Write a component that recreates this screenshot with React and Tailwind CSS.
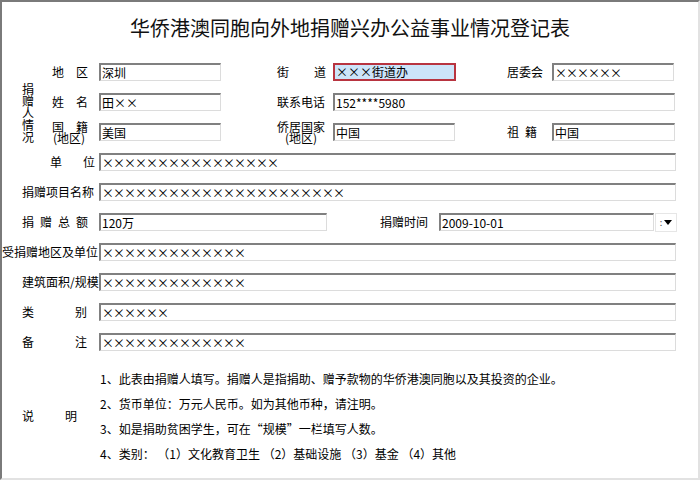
const inputCls =
  'h-[18px] shrink-0 bg-white border-t-2 border-l-2 border-r border-b border-t-[#808080] border-l-[#808080] border-r-[#dcdcdc] border-b-[#dcdcdc] pl-[1px] text-[12px] leading-[15px] whitespace-nowrap overflow-hidden';

const Field = ({ className = '', children }) => (
  <div className={`${inputCls} ${className}`}>{children}</div>
);

const Spread = ({ className = '', chars }) => (
  <div className={`flex justify-between ${className}`}>
    {chars.map((c) => (
      <span key={c}>{c}</span>
    ))}
  </div>
);

const notes = [
  '1、此表由捐赠人填写。捐赠人是指捐助、赠予款物的华侨港澳同胞以及其投资的企业。',
  '2、货币单位：万元人民币。如为其他币种，请注明。',
  '3、如是捐助贫困学生，可在“规模”一栏填写人数。',
  '4、类别： （1）文化教育卫生 （2）基础设施 （3）基金 （4）其他',
];

const App = () => {
  return (
    <div className="w-[700px] h-[480px] bg-white text-black text-[12px] leading-[18px] font-['Noto_Sans_CJK_SC','Liberation_Sans',sans-serif] border-t-2 border-l-2 border-r-2 border-b-2 border-t-[#7a7a7a] border-l-[#7a7a7a] border-r-[#e2e2e2] border-b-[#e2e2e2] overflow-hidden">
      <div className="pt-[12px] text-center text-[20px] leading-[28px] text-[#111]">
        华侨港澳同胞向外地捐赠兴办公益事业情况登记表
      </div>

      <div className="mt-[21px] flex flex-col gap-[12px]">
        {/* 捐赠人情况 */}
        <div className="flex h-[78px]">
          <div className="w-[50px] shrink-0 pl-[20px] pt-[20px] flex flex-col leading-[12px]">
            <span>捐</span>
            <span>赠</span>
            <span>人</span>
            <span>情</span>
            <span>况</span>
          </div>
          <div className="flex flex-col gap-[12px]">
            <div className="flex h-[18px] items-center">
              <div className="w-[47px] shrink-0">地　区</div>
              <Field className="w-[122px]">深圳</Field>
              <div className="w-[112px] shrink-0 pl-[56px]">
                <Spread className="w-[49px]" chars={['街', '道']} />
              </div>
              <div className="h-[18px] w-[123px] shrink-0 border-2 border-[#b83440] bg-[#cce4f9] pl-[1px] leading-[14px] whitespace-nowrap overflow-hidden">
                ×××街道办
              </div>
              <div className="w-[96px] shrink-0 text-right pr-[9px]">居委会</div>
              <Field className="w-[122px] tracking-[-1px]">××××××</Field>
            </div>

            <div className="flex h-[18px] items-center">
              <div className="w-[47px] shrink-0">姓　名</div>
              <Field className="w-[122px]">田××</Field>
              <div className="w-[112px] shrink-0 pl-[56px]">联系电话</div>
              <Field className="w-[342px]">152****5980</Field>
            </div>

            <div className="flex h-[18px] items-center">
              <div className="w-[47px] shrink-0 flex flex-col leading-[11px]">
                <span>国　籍</span>
                <span className="pl-[1px]">(地区)</span>
              </div>
              <Field className="w-[122px]">美国</Field>
              <div className="w-[112px] shrink-0 pl-[56px]">
                <div className="w-[48px] flex flex-col items-center leading-[11px]">
                  <span>侨居国家</span>
                  <span>(地区)</span>
                </div>
              </div>
              <Field className="w-[122px]">中国</Field>
              <div className="w-[97px] shrink-0 flex justify-end pr-[15px] gap-[6px]">
                <span>祖</span>
                <span>籍</span>
              </div>
              <Field className="w-[123px]">中国</Field>
            </div>
          </div>
        </div>

        <div className="flex h-[18px] items-center">
          <div className="w-[97px] shrink-0 pl-[48px]">
            <Spread className="w-[45px]" chars={['单', '位']} />
          </div>
          <Field className="w-[577px] tracking-[-1px]">××××××××××××××××</Field>
        </div>

        <div className="flex h-[18px] items-center">
          <div className="w-[97px] shrink-0 pl-[20px] whitespace-nowrap">捐赠项目名称</div>
          <Field className="w-[577px] tracking-[-1px]">××××××××××××××××××××××</Field>
        </div>

        <div className="flex h-[18px] items-center">
          <div className="w-[97px] shrink-0 pl-[20px]">
            <Spread className="w-[66px]" chars={['捐', '赠', '总', '额']} />
          </div>
          <Field className="w-[228px]">120万</Field>
          <div className="w-[112px] shrink-0 text-right pr-[11px]">捐赠时间</div>
          <Field className="w-[215px]">2009-10-01</Field>
          <div className="ml-[1px] h-[19px] w-[22px] shrink-0 border border-[#e6e6e6] flex items-center justify-center gap-[2px]">
            <span className="text-[9px] leading-[9px] text-[#555]">:</span>
            <svg width="8" height="5" viewBox="0 0 8 5">
              <path d="M0 0 L8 0 L4 5 Z" fill="#000" />
            </svg>
          </div>
        </div>

        <div className="flex h-[18px] items-center">
          <div className="w-[97px] shrink-0 whitespace-nowrap">受捐赠地区及单位</div>
          <Field className="w-[577px] tracking-[-1px]">×××××××××××××</Field>
        </div>

        <div className="flex h-[18px] items-center">
          <div className="w-[97px] shrink-0 pl-[20px] whitespace-nowrap">建筑面积/规模</div>
          <Field className="w-[577px] tracking-[-1px]">×××××××××××××</Field>
        </div>

        <div className="flex h-[18px] items-center">
          <div className="w-[97px] shrink-0 pl-[20px]">
            <Spread className="w-[65px]" chars={['类', '别']} />
          </div>
          <Field className="w-[577px] tracking-[-1px]">××××××</Field>
        </div>

        <div className="flex h-[18px] items-center">
          <div className="w-[97px] shrink-0 pl-[20px]">
            <Spread className="w-[65px]" chars={['备', '注']} />
          </div>
          <Field className="w-[577px] tracking-[-1px]">×××××××××××××</Field>
        </div>
      </div>

      {/* 说明 */}
      <div className="mt-[15px] flex items-center">
        <div className="w-[98px] shrink-0 pl-[20px]">
          <Spread className="w-[55px]" chars={['说', '明']} />
        </div>
        <div className="flex flex-col leading-[25px] whitespace-nowrap">
          {notes.map((n) => (
            <div key={n}>{n}</div>
          ))}
        </div>
      </div>
    </div>
  );
};

export default App;
